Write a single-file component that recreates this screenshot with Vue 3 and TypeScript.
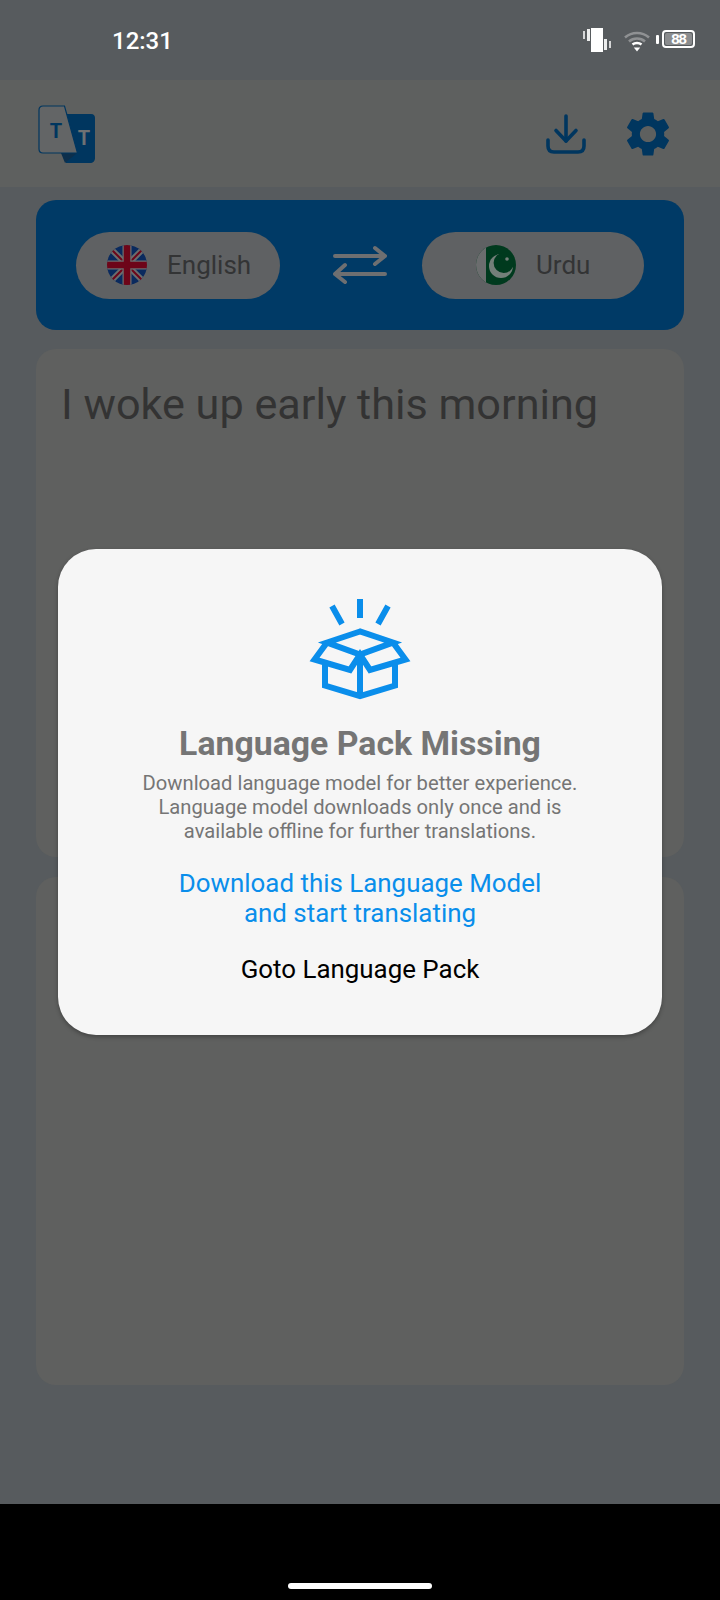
<template>
  <div class="screen">
    <div class="status-bar">
      <span class="clock">12:31</span>
      <div class="status-icons">
        <svg class="vibrate" width="28" height="24" viewBox="0 0 28 24">
          <rect x="8" y="0" width="12" height="24" fill="#fff" />
          <rect x="0" y="3" width="2" height="8" fill="#d5d6d7" />
          <rect x="4" y="1" width="3" height="12" fill="#eceded" />
          <rect x="21" y="11" width="3" height="11" fill="#eceded" />
          <rect x="26" y="13" width="2" height="7" fill="#d5d6d7" />
        </svg>
        <svg class="wifi" width="26" height="22" viewBox="0 0 26 22">
          <path d="M1 7.5C8 1.500 18 1.500 25 7.500" fill="none" stroke="#8f9193" stroke-width="2.600" />
          <path d="M5 11.500C9.500 7.500 16.500 7.500 21 11.500" fill="none" stroke="#8f9193" stroke-width="2.600" />
          <path d="M8.500 14.500C11 12.500 15 12.500 17.500 14.500" fill="none" stroke="#fff" stroke-width="2.600" />
          <path d="M9.800 17.500H16.200L13 21.500Z" fill="#fff" />
        </svg>
        <span class="battery-nub"></span>
        <div class="battery"><span class="battery-level">88</span></div>
      </div>
    </div>

    <header class="app-bar">
      <svg class="logo" width="60" height="60" viewBox="0 0 60 60">
        <path d="M28 9H53C56 9 57 11 57 13V53C57 56 55 58 52 58H28Z" fill="#00365f" />
        <path d="M23 48H39L27 58Z" fill="#0c2f4c" />
        <path d="M5 1H26.500L39.500 48H5C2.500 48 1 46.500 1 44V5C1 2.500 2.500 1 5 1Z" fill="#636566" stroke="#00365f" stroke-width="1.200" />
        <text x="18" y="33" class="logo-t logo-t-dark">T</text>
        <text x="46" y="40" class="logo-t logo-t-light">T</text>
      </svg>
      <div class="app-actions">
        <svg width="40" height="40" viewBox="0 0 40 40" fill="none" stroke="#00365f" stroke-width="3.600" stroke-linecap="round" stroke-linejoin="round">
          <path d="M20 2V27" />
          <path d="M10 16.500L20 27L30 16.500" />
          <path d="M2 26V32C2 36 4 38 8 38H32C36 38 38 36 38 32V26" />
        </svg>
        <svg class="gear" width="54" height="54" viewBox="0 0 24 24">
          <path fill="#00365f" d="M19.140 12.940c.04-.3.06-.61.06-.94 0-.32-.02-.64-.07-.94l2.030-1.580c.18-.14.23-.41.12-.61l-1.920-3.320c-.12-.22-.37-.29-.59-.22l-2.390.96c-.5-.38-1.030-.7-1.620-.94l-.36-2.540c-.04-.24-.24-.41-.48-.41h-3.840c-.24 0-.43.17-.47.41l-.36 2.540c-.59.24-1.130.57-1.620.94l-2.390-.96c-.22-.08-.47 0-.59.22L2.740 8.870c-.12.21-.08.47.12.61l2.030 1.580c-.05.3-.09.63-.09.94s.02.64.07.94l-2.030 1.580c-.18.14-.23.41-.12.61l1.920 3.320c.12.22.37.29.59.22l2.390-.96c.5.38 1.030.7 1.620.94l.36 2.540c.05.24.24.41.48.41h3.840c.24 0 .44-.17.47-.41l.36-2.540c.59-.24 1.130-.56 1.620-.94l2.390.96c.22.08.47 0 .59-.22l1.920-3.320c.12-.22.07-.47-.12-.61l-2.010-1.580zM12 15.600c-1.980 0-3.600-1.620-3.600-3.600s1.620-3.600 3.600-3.600 3.600 1.620 3.600 3.600-1.620 3.600-3.600 3.600z" />
        </svg>
      </div>
    </header>

    <main class="content">
      <section class="lang-panel">
        <div class="lang-pill lang-pill-en">
          <svg width="40" height="40" viewBox="0 0 40 40">
            <defs>
              <clipPath id="flag-en"><circle cx="20" cy="20" r="20" /></clipPath>
            </defs>
            <g clip-path="url(#flag-en)">
              <rect width="40" height="40" fill="#0a2a5e" />
              <path d="M4 4L36 36M36 4L4 36" stroke="#6b6d6e" stroke-width="6" />
              <path d="M4 4L36 36M36 4L4 36" stroke="#6d0519" stroke-width="2" />
              <path d="M20 0V40M0 20H40" stroke="#6b6d6e" stroke-width="9" />
              <path d="M20 0V40M0 20H40" stroke="#6d0519" stroke-width="6.500" />
            </g>
          </svg>
          <span class="lang-name">English</span>
        </div>
        <svg class="swap" width="54" height="40" viewBox="0 0 54 40" fill="none" stroke="#6e6f71" stroke-width="4" stroke-linecap="round" stroke-linejoin="round">
          <path d="M2 11H52M42 3L52 11L42 19" />
          <path d="M52 29H2M12 20L2 29L12 37" />
        </svg>
        <div class="lang-pill lang-pill-ur">
          <svg width="40" height="40" viewBox="0 0 40 40">
            <defs>
              <clipPath id="flag-ur"><circle cx="20" cy="20" r="20" /></clipPath>
            </defs>
            <g clip-path="url(#flag-ur)">
              <rect width="40" height="40" fill="#003a1e" />
              <rect width="10" height="40" fill="#6b6d6e" />
              <circle cx="25" cy="21" r="12" fill="#737f79" />
              <circle cx="27.700" cy="17.800" r="10.100" fill="#003a1e" />
              <circle cx="31" cy="14" r="1.800" fill="#737f79" />
            </g>
          </svg>
          <span class="lang-name">Urdu</span>
        </div>
      </section>

      <section class="text-card">
        <p class="source-text">I woke up early this morning</p>
      </section>
      <section class="text-card"></section>
    </main>

    <div class="nav-bar"><span class="home-pill"></span></div>

    <div class="overlay">
      <div class="dialog">
        <svg class="box-icon" width="110" height="106" viewBox="0 0 110 106" fill="none" stroke="#0a8eeb" stroke-width="6" stroke-linejoin="miter">
          <path d="M55 4V23M27 11L37 29M83 11L73 29" />
          <path d="M55 36.500L22 47.500L55 59.500L88 47.500Z" />
          <path d="M22 47.500L9.500 64.500L45 75L55 59.500L65 75L100.500 64.500L88 47.500" />
          <path d="M20 70V90.500L55 101L90 90.500V70M55 59.500V101" />
        </svg>
        <h2 class="dialog-title">Language Pack Missing</h2>
        <p class="dialog-text">Download language model for better experience.<br />Language model downloads only once and is<br />available offline for further translations.</p>
        <button class="dialog-link">Download this Language Model<br />and start translating</button>
        <button class="dialog-alt">Goto Language Pack</button>
      </div>
    </div>
  </div>
</template>

<script setup lang="ts">
</script>

<style>
body {
  background: #575b5e;
}
</style>

<style scoped>
.screen {
  position: relative;
  width: 720px;
  height: 1600px;
  display: flex;
  flex-direction: column;
  overflow: hidden;
  background: #575b5e;
  font-family: Roboto, "Liberation Sans", sans-serif;
}

.status-bar {
  height: 80px;
  flex: none;
  display: flex;
  align-items: flex-start;
  padding: 0 25px 0 112px;
  box-sizing: border-box;
}

.clock {
  margin-top: 27px;
  color: #fff;
  font-size: 24px;
  line-height: 28px;
  font-weight: 500;
}

.status-icons {
  margin-left: auto;
  margin-top: 28px;
  display: flex;
  align-items: flex-start;
}

.wifi {
  margin: 2px 0 0 13px;
}

.battery-nub {
  width: 3px;
  height: 9px;
  margin: 7px 3px 0 6px;
  background: #fff;
  border-radius: 1px;
}

.battery {
  width: 33px;
  height: 18px;
  margin-top: 2px;
  box-sizing: border-box;
  border: 2px solid #fff;
  border-radius: 4px;
  padding: 1px;
}

.battery-level {
  display: block;
  height: 100%;
  background: #8a8c8e;
  border-radius: 2px;
  color: #fff;
  font-family: "Liberation Sans", sans-serif;
  font-size: 15px;
  line-height: 12px;
  font-weight: 700;
  letter-spacing: -1px;
  text-align: center;
}

.app-bar {
  height: 107px;
  flex: none;
  display: flex;
  align-items: center;
  padding: 0 45px 0 38px;
  box-sizing: border-box;
  background: #5e605f;
}

.logo {
  margin-top: 3px;
}

.logo-t {
  font-family: Roboto, sans-serif;
  font-size: 20px;
  font-weight: 700;
  text-anchor: middle;
}

.logo-t-dark {
  fill: #00365f;
}

.logo-t-light {
  fill: #6e7173;
}

.app-actions {
  margin-left: auto;
  display: flex;
  align-items: center;
  gap: 35px;
}

.content {
  flex: 1;
  display: flex;
  flex-direction: column;
  gap: 20px;
  padding: 13px 36px 0;
}

.lang-panel {
  height: 130px;
  flex: none;
  display: flex;
  align-items: center;
  padding: 0 40px;
  box-sizing: border-box;
  background: #003a66;
  border-radius: 20px;
  margin-bottom: -1px;
}

.lang-pill {
  height: 67px;
  box-sizing: border-box;
  display: flex;
  align-items: center;
  background: #5f6163;
  border-radius: 34px;
}

.lang-pill-en {
  width: 204px;
  padding-left: 31px;
  gap: 20px;
}

.lang-pill-ur {
  width: 222px;
  padding-left: 54px;
  gap: 20px;
}

.lang-name {
  color: #333435;
  font-size: 26px;
}

.swap {
  margin: 0 35px 0 53px;
}

.text-card {
  height: 508px;
  flex: none;
  box-sizing: border-box;
  padding: 30px 25px;
  background: #5f605f;
  border-radius: 20px;
}

.source-text {
  margin: 0;
  color: #333;
  font-size: 43.2px;
  line-height: 52px;
}

.nav-bar {
  height: 96px;
  flex: none;
  display: flex;
  align-items: flex-end;
  justify-content: center;
  padding-bottom: 11px;
  box-sizing: border-box;
  background: #000;
}

.home-pill {
  width: 144px;
  height: 6px;
  background: #fff;
  border-radius: 3px;
}

.overlay {
  position: absolute;
  inset: 0;
  display: flex;
  justify-content: center;
  align-items: flex-start;
  padding-top: 549px;
  box-sizing: border-box;
}

.dialog {
  width: 604px;
  height: 486px;
  box-sizing: border-box;
  padding-top: 46px;
  display: flex;
  flex-direction: column;
  align-items: center;
  text-align: center;
  background: #f6f6f6;
  border-radius: 38px;
  box-shadow: 0 2px 4px rgba(0, 0, 0, 0.3);
}

.box-icon {
  flex: none;
}

.dialog-title {
  margin: 23px 0 0;
  color: #757575;
  font-size: 33.8px;
  line-height: 40px;
  font-weight: 700;
}

.dialog-text {
  margin: 7px 0 0;
  color: #757575;
  font-size: 20.2px;
  line-height: 24px;
}

.dialog-link,
.dialog-alt {
  padding: 0;
  border: none;
  background: none;
  font-family: inherit;
  font-size: 25.9px;
  line-height: 30px;
}

.dialog-link {
  margin-top: 25px;
  color: #0a8eeb;
}

.dialog-alt {
  margin-top: 26px;
  color: #000;
}
</style>
